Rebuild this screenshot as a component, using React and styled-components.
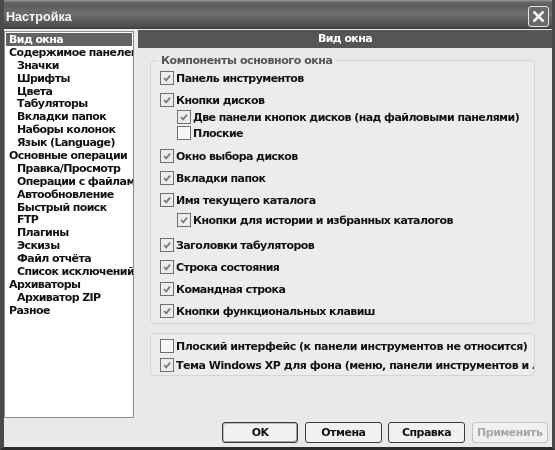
import React from 'react';
import styled, { createGlobalStyle } from 'styled-components';

const GlobalStyle = createGlobalStyle`
  html, body {
    margin: 0;
    padding: 0;
    background: #e9e9e9;
  }
`;

const Window = styled.div`
  width: 555px;
  height: 450px;
  box-sizing: border-box;
  display: flex;
  flex-direction: column;
  overflow: hidden;
  background: #e9e9e9;
  border-left: 4px solid #4a4a4a;
  border-right: 3px solid #4a4a4a;
  border-bottom: 3px solid #2c2c2c;
  font-family: "DejaVu Sans", sans-serif;
  font-weight: 700;
  font-size: 11px;
  letter-spacing: -0.58px;
  color: #111;
  filter: blur(0.3px);
`;

const TitleBar = styled.div`
  flex: none;
  box-sizing: border-box;
  height: 29px;
  margin: 0 -3px 0 -4px;
  padding: 4px 6px 0 6px;
  display: flex;
  align-items: center;
  justify-content: space-between;
  background: linear-gradient(#9a9a9a 0, #6a6a6a 2px, #5c5c5c 5px, #6e6e6e 14px, #4e4e4e 26px, #3c3c3c 29px);
`;

const TitleText = styled.span`
  font-family: "Liberation Sans", sans-serif;
  font-weight: 700;
  font-size: 12.6px;
  letter-spacing: 0;
  color: #f4f4f4;
`;

const CloseButton = styled.button`
  width: 21px;
  height: 21px;
  padding: 0;
  display: flex;
  align-items: center;
  justify-content: center;
  background: #6a6a6a;
  border: 1px solid #e4e4e4;
  border-radius: 3px;
`;

const Main = styled.div`
  flex: 1;
  min-height: 0;
  display: flex;
  gap: 4px;
  padding: 1px 0 4px;
`;

const SideList = styled.ul`
  width: 130px;
  flex: none;
  box-sizing: border-box;
  height: 387px;
  margin: 1px 0 0;
  padding: 1px;
  list-style: none;
  background: #fff;
  border: 1px solid #8c8c8c;
  overflow: hidden;
`;

const SideItem = styled.li`
  height: 12.9px;
  line-height: 13px;
  padding-left: ${(p) => (p.$sub ? 11 : 3)}px;
  white-space: nowrap;
  letter-spacing: -0.6px;
  background: ${(p) => (p.$active ? '#636363' : 'transparent')};
  color: ${(p) => (p.$active ? '#fff' : '#111')};
`;

const Content = styled.div`
  flex: 1;
  min-width: 0;
  display: flex;
  flex-direction: column;
`;

const PageHeader = styled.div`
  flex: none;
  height: 18px;
  line-height: 18px;
  text-align: center;
  background: #555;
  color: #fff;
`;

const Fieldset = styled.fieldset`
  box-sizing: border-box;
  width: 385px;
  height: ${(p) => p.$height}px;
  margin: ${(p) => p.$top}px 0 0 12px;
  padding: ${(p) => p.$padTop}px 0 0 9px;
  border: 1px solid #d4d4d4;
  border-radius: 5px;
  background: #ececec;
  overflow: hidden;
  min-width: 0;
`;

const PlainGroup = styled(Fieldset)`
  letter-spacing: -0.47px;
`;

const Legend = styled.legend`
  margin-left: -2px;
  padding: 0 3px;
  font-weight: 700;
  letter-spacing: -0.42px;
  color: #555;
  line-height: 13px;
`;

const Row = styled.label`
  display: flex;
  align-items: center;
  gap: 2px;
  height: 14px;
  margin-top: ${(p) => p.$gap || 0}px;
  margin-left: ${(p) => (p.$nested ? 17 : 0)}px;
  white-space: nowrap;
`;

const Box = styled.span`
  flex: none;
  width: 12px;
  height: 12px;
  display: flex;
  align-items: center;
  justify-content: center;
  background: ${(p) => (p.$checked ? '#ececec' : '#f6f6f6')};
  border: 1px solid #6f6f6f;
`;

const Footer = styled.div`
  display: flex;
  justify-content: flex-end;
  gap: 6.7px;
  margin-top: auto;
  padding-right: 4px;
`;

const Button = styled.button`
  width: 76.5px;
  height: 21px;
  padding: 0;
  font: inherit;
  letter-spacing: -0.5px;
  color: ${(p) => (p.disabled ? '#a8a8a8' : '#111')};
  background: #f1f1f1;
  border: 1px solid ${(p) => (p.disabled ? '#c4c4c4' : '#3a3a3a')};
  border-radius: 3px;
  box-shadow: ${(p) => (p.$primary ? 'inset -1px -1px 0 #a0a0a0, inset 1px 1px 0 #bbb' : 'none')};
`;

const sideItems = [
  ['Вид окна', false, true],
  ['Содержимое панелей'],
  ['Значки', true],
  ['Шрифты', true],
  ['Цвета', true],
  ['Табуляторы', true],
  ['Вкладки папок', true],
  ['Наборы колонок', true],
  ['Язык (Language)', true],
  ['Основные операции'],
  ['Правка/Просмотр', true],
  ['Операции с файлами', true],
  ['Автообновление', true],
  ['Быстрый поиск', true],
  ['FTP', true],
  ['Плагины', true],
  ['Эскизы', true],
  ['Файл отчёта', true],
  ['Список исключений', true],
  ['Архиваторы'],
  ['Архиватор ZIP', true],
  ['Разное'],
];

const options = [
  { text: 'Панель инструментов', checked: true },
  { text: 'Кнопки дисков', checked: true, gap: 8 },
  { text: 'Две панели кнопок дисков (над файловыми панелями)', checked: true, nested: true, gap: 3 },
  { text: 'Плоские', nested: true, gap: 2 },
  { text: 'Окно выбора дисков', checked: true, gap: 9 },
  { text: 'Вкладки папок', checked: true, gap: 8 },
  { text: 'Имя текущего каталога', checked: true, gap: 8 },
  { text: 'Кнопки для истории и избранных каталогов', checked: true, nested: true, gap: 6 },
  { text: 'Заголовки табуляторов', checked: true, gap: 11 },
  { text: 'Строка состояния', checked: true, gap: 8 },
  { text: 'Командная строка', checked: true, gap: 8 },
  { text: 'Кнопки функциональных клавиш', checked: true, gap: 8 },
];

function Check({ text, checked, nested, gap }) {
  return (
    <Row $nested={nested} $gap={gap}>
      <Box $checked={checked}>
        {checked && (
          <svg width="10" height="10" viewBox="0 0 10 10">
            <path d="M2 5l2.2 2.4L8 2.6" fill="none" stroke="#7a7a7a" strokeWidth="1.8" />
          </svg>
        )}
      </Box>
      {text}
    </Row>
  );
}

export default function App() {
  return (
    <>
      <GlobalStyle />
      <Window>
        <TitleBar>
          <TitleText>Настройка</TitleText>
          <CloseButton aria-label="Закрыть">
            <svg width="13" height="13" viewBox="0 0 13 13">
              <path d="M1.5 1.5l10 10M11.5 1.5l-10 10" stroke="#f2f2f2" strokeWidth="2.6" />
            </svg>
          </CloseButton>
        </TitleBar>
        <Main>
          <SideList>
            {sideItems.map(([label, sub, active]) => (
              <SideItem key={label} $sub={sub} $active={active}>
                {label}
              </SideItem>
            ))}
          </SideList>
          <Content>
            <PageHeader>Вид окна</PageHeader>
            <Fieldset $height={270} $top={6} $padTop={4}>
              <Legend>Компоненты основного окна</Legend>
              {options.map((o) => (
                <Check key={o.text} {...o} />
              ))}
            </Fieldset>
            <PlainGroup as="div" $height={43} $top={9} $padTop={5}>
              <Check text="Плоский интерфейс (к панели инструментов не относится)" />
              <Check text="Тема Windows XP для фона (меню, панели инструментов и летучие подсказки)" checked gap={5} />
            </PlainGroup>
            <Footer>
              <Button $primary>OK</Button>
              <Button>Отмена</Button>
              <Button>Справка</Button>
              <Button disabled>Применить</Button>
            </Footer>
          </Content>
        </Main>
      </Window>
    </>
  );
}
